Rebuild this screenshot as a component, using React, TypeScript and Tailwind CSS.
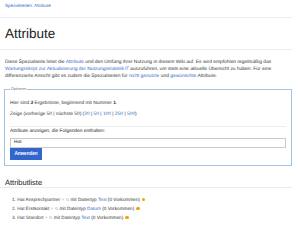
const Search = () => (
  <svg viewBox="0 0 10 10" className="inline-block w-[3.5px] h-[3.5px] align-middle" fill="none" stroke="#a2a9b1" strokeWidth="1.4">
    <circle cx="4" cy="4" r="3" />
    <path d="M6.2 6.2 9 9" />
  </svg>
);

const External = () => (
  <svg viewBox="0 0 12 12" className="inline-block w-[3.6px] h-[3.6px] ml-[1px] align-baseline" fill="none" stroke="#3366cc" strokeWidth="1.3">
    <path d="M9 7v3.5H1.5V3H5" />
    <path d="M7 1h4v4M11 1 5.5 6.5" />
  </svg>
);

const Warn = () => (
  <span className="inline-block w-[3.5px] h-[3.5px] rounded-full bg-[#f0a400] align-middle ml-[2px]" />
);

const items = [
  { name: 'Hat Ansprechpartner', type: 'Text' },
  { name: 'Hat Erstkontakt', type: 'Datum' },
  { name: 'Hat Standort', type: 'Text' },
];

const Link = ({ children }: { children: React.ReactNode }) => (
  <span className="text-[#3366cc]">{children}</span>
);

export default function App() {
  return (
    <div className="w-[300px] h-[250px] overflow-hidden bg-white text-[#333] font-['Liberation_Sans',Arial,sans-serif] [text-rendering:geometricPrecision]">
      <div className="w-[292px]">
        <div className="h-[18px] border-b border-[#eaecf0] pl-[5px] pt-[3px] text-[4.5px] leading-[6px] text-[#3366cc]">
          Spezialseiten: Attribute
        </div>
        <h1 className="h-[32px] border-b border-[#eaecf0] pl-[5px] pt-[8px] text-[13.5px] leading-[15px] text-[#222]">
          Attribute
        </h1>

        <p className="mt-[9px] pl-[5px] text-[4.9px] leading-[7px] whitespace-nowrap">
          Diese Spezialseite listet die <Link>Attribute</Link> und den Umfang ihrer Nutzung in diesem Wiki auf. Es wird empfohlen regelmäßig das
          <br />
          <Link>Wartungsskript zur Aktualisierung der Nutzungsstatistik</Link>
          <External /> auszuführen, um stets eine aktuelle Übersicht zu haben. Für eine
          <br />
          differenzierte Ansicht gibt es zudem die Spezialseiten für <Link>nicht genutzte</Link> und <Link>gewünschte</Link> Attribute.
        </p>

        <div className="relative mt-[9px] ml-[4px] w-[288px] h-[77px] border border-[#a4c2e2] pl-[5px] pr-[5px] text-[4.85px] leading-[7px]">
          <span className="absolute -top-[3px] left-[5px] bg-white px-[1px] text-[3.8px] leading-[5px] text-[#72777d]">
            Optionen
          </span>
          <div className="pt-[10px]">
            Hier sind <b>3</b> Ergebnisse, beginnend mit Nummer <b>1</b>.
          </div>
          <div className="mt-[4px]">
            Zeige (vorherige 50 | nächste 50) (<Link>20</Link> | <Link>50</Link> | <Link>100</Link> | <Link>250</Link> | <Link>500</Link>)
          </div>
          <div className="mt-[7.5px] h-px bg-[#eaecf0]" />
          <div className="mt-[1.5px] text-[#222]">Attribute anzeigen, die Folgenden enthalten:</div>
          <div className="mt-[2.5px] h-[10px] border border-[#c8ccd1] pl-[3px] leading-[8px] text-[#222]">Hat</div>
          <button className="block h-[12px] w-[32px] bg-[#3366cc] text-white font-bold text-[4.6px] leading-[12px] text-center">
            Anwenden
          </button>
        </div>

        <h2 className="mt-[13px] h-[9px] border-b border-[#eaecf0] pl-[5px] text-[7.5px] leading-[8px] text-[#222]">
          Attributliste
        </h2>

        <ol className="mt-[6.5px] pl-[12px] text-[4.7px] leading-[9px] whitespace-nowrap">
          {items.map((it, i) => (
            <li key={it.name}>
              {i + 1}. {it.name} <span className="text-[#a2a9b1]">+</span> <Search /> mit Datentyp <Link>{it.type}</Link> (0 Vorkommen)
              <Warn />
            </li>
          ))}
        </ol>
      </div>
    </div>
  );
}
